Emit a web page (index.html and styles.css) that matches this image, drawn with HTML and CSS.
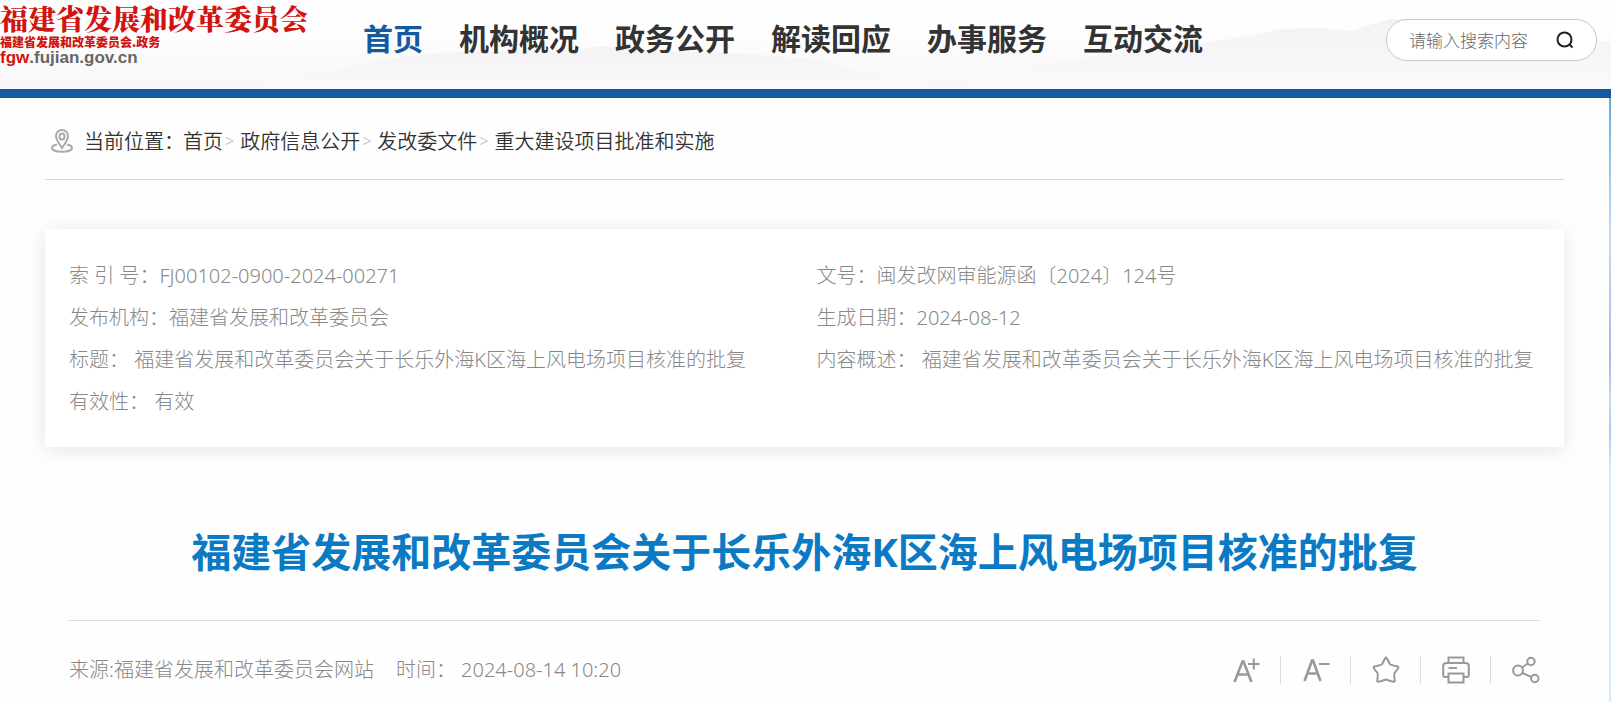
FILE: index.html
```html
<!DOCTYPE html>
<html lang="zh-CN">
<head>
<meta charset="utf-8">
<meta name="viewport" content="width=device-width, initial-scale=1">
<title>福建省发展和改革委员会关于长乐外海K区海上风电场项目核准的批复</title>
<link rel="stylesheet" href="styles.css">
</head>
<body>
<header class="site-header">
  <svg class="hills" viewBox="0 0 1611 89" preserveAspectRatio="none" aria-hidden="true">
    <defs>
      <linearGradient id="mist" x1="0" y1="0" x2="0" y2="1">
        <stop offset="0" stop-color="#f1eff1"/>
        <stop offset="1" stop-color="#fbf9fb"/>
      </linearGradient>
      <linearGradient id="haze" x1="0" y1="0" x2="0" y2="1">
        <stop offset="0" stop-color="#fefefe"/>
        <stop offset="1" stop-color="#f8f6f8"/>
      </linearGradient>
    </defs>
    <path fill="url(#haze)" d="M0 30H1611V89H0Z"/>
    <path fill="url(#mist)" opacity=".7" d="M240 89 L330 72 L370 62 L400 57 L440 53 L500 51 L580 50 L600 46 L640 50 L750 54 L820 60 L880 76 L960 89Z"/>
    <path fill="url(#mist)" opacity=".8" d="M960 89 L1000 72 L1110 54 L1170 48 L1250 36 L1280 29 L1320 28 L1350 31 L1390 19 L1450 22 L1560 36 L1611 42 V89Z"/>
  </svg>
  <a class="logo" href="#">
    <span class="logo-name">福建省发展和改革委员会</span>
    <span class="logo-sub">福建省发展和改革委员会.政务</span>
    <span class="logo-url"><b>fgw</b>.fujian.gov.cn</span>
  </a>
  <nav class="nav">
    <a class="active" href="#">首页</a>
    <a href="#">机构概况</a>
    <a href="#">政务公开</a>
    <a href="#">解读回应</a>
    <a href="#">办事服务</a>
    <a href="#">互动交流</a>
  </nav>
  <form class="search">
    <input type="text" placeholder="请输入搜索内容" aria-label="请输入搜索内容">
    <button type="button" aria-label="搜索">
      <svg width="18" height="18" viewBox="0 0 18 18"><circle cx="8.500" cy="8.500" r="7"/><path d="M13.500 13.500l3 3"/></svg>
    </button>
  </form>
</header>
<main class="page">
  <nav class="crumbs" aria-label="当前位置">
    <svg width="22" height="24" viewBox="0 0 22 24"><path d="M11 19C8 14.500 5 11 5 7a6 6 0 0 1 12 0C17 11 14 14.500 11 19z"/><ellipse cx="11" cy="7.500" rx="2.500" ry="3"/><path d="M6 15.500C3 16 1 17.400 1 19c0 2.300 4.500 3.800 10 3.800S21 21.300 21 19c0-1.600-2-3-5-3.500"/></svg>
    <span class="here">当前位置：</span>
    <a href="#">首页</a><span class="sep">&gt;</span>
    <a href="#">政府信息公开</a><span class="sep">&gt;</span>
    <a href="#">发改委文件</a><span class="sep">&gt;</span>
    <a href="#">重大建设项目批准和实施</a>
  </nav>
  <section class="card">
    <p>索 引 号：FJ00102-0900-2024-00271</p>
    <p>文号：闽发改网审能源函〔2024〕124号</p>
    <p>发布机构：福建省发展和改革委员会</p>
    <p>生成日期：2024-08-12</p>
    <p>标题： 福建省发展和改革委员会关于长乐外海K区海上风电场项目核准的批复</p>
    <p>内容概述： 福建省发展和改革委员会关于长乐外海K区海上风电场项目核准的批复</p>
    <p>有效性： 有效</p>
  </section>
  <article class="article">
    <h1>福建省发展和改革委员会关于长乐外海K区海上风电场项目核准的批复</h1>
    <div class="info">
      <span>来源:福建省发展和改革委员会网站</span>
      <span>时间： 2024-08-14 10:20</span>
      <div class="tools">
        <button type="button" aria-label="放大字体"><svg width="28" height="28" viewBox="0 0 28 28"><path class="thick" d="M2.500 26L10.500 5.500H11.500L19.500 26M5.500 18.500H16.500"/><path d="M16 8H27.500M21.800 2.500V13.500"/></svg></button>
        <button type="button" aria-label="缩小字体"><svg width="28" height="28" viewBox="0 0 28 28"><path class="thick" d="M2.500 25L10 4.500H11L18.500 25M5.500 17.500H16"/><path d="M17 8H27.500"/></svg></button>
        <button type="button" aria-label="收藏"><svg width="28" height="28" viewBox="0 0 28 28"><path stroke-linejoin="round" d="M14 1.500Q15 2 17.800 8Q18.500 9 26 10.500Q27.500 11.500 22.500 17Q21.800 18 22.800 25Q22.500 26.800 14 23.500Q5.500 26.800 5.200 25Q6.200 18 5.500 17Q.5 11.500 2 10.500Q9.500 9 10.200 8Q13 2 14 1.500Z"/></svg></button>
        <button type="button" aria-label="打印"><svg width="28" height="28" viewBox="0 0 28 28"><path d="M6.500 7V1.500H21.500V7M6 21H3Q1.200 21 1.200 19V10Q1.200 7 4.200 7H23.800Q26.800 7 26.800 10V19Q26.800 21 25 21H22M6.500 17.500H21.500V26.500H6.500ZM6.500 12H15"/></svg></button>
        <button type="button" aria-label="分享"><svg width="28" height="28" viewBox="0 0 28 28"><circle cx="6" cy="14.500" r="4.900"/><circle cx="19" cy="5.500" r="3.700"/><circle cx="22.800" cy="22.500" r="3.700"/><path d="M10 11.500L16 7.500M10.500 17L19.500 21.200"/></svg></button>
      </div>
    </div>
  </article>
</main>
</body>
</html>
```

FILE: styles.css
```css
* { box-sizing: border-box; }
html, body { min-height: 100%; }
body {
  margin: 0;
  background: linear-gradient(#62add6 98px, #9fcdec 180px, #c8d8f2 240px, #a8b6e0 360px, #c6daf4 400px, #a9c9ec 430px, #d4eaff 470px);
  color: #333;
  font: 300 20px/42px "Noto Sans", "Noto Sans CJK SC", sans-serif;
}
a { color: inherit; text-decoration: none; }
button { border: 0; padding: 0; background: none; cursor: pointer; }
svg { display: block; fill: none; stroke: currentColor; stroke-width: 2; }

.site-header {
  position: relative;
  display: flex;
  align-items: flex-start;
  height: 98px;
  border-bottom: 9px solid #1559a0;
  background: #fefefe;
}
.hills {
  position: absolute;
  inset: 0;
  width: 100%;
  height: 100%;
  stroke: none;
}
.logo {
  position: relative;
  display: flex;
  flex-direction: column;
  width: 363px;
  padding-top: 1px;
  color: #d1140f;
  white-space: nowrap;
}
.logo-name {
  font: 900 28px/34px "Noto Serif CJK SC", "Noto Sans CJK SC", serif;
}
.logo-sub { font: 900 12px/13px "Noto Sans CJK SC", sans-serif; }
.logo-url {
  font: bold 17px/19px "Liberation Sans", sans-serif;
  color: #666;
}
.logo-url b { color: #d1140f; }
.nav {
  position: relative;
  display: flex;
  gap: 36px;
  padding-top: 18px;
  font-size: 30px;
  font-weight: 700;
  white-space: nowrap;
}
.nav .active { color: #1559a0; }
.search {
  position: relative;
  display: flex;
  align-items: center;
  width: 211px;
  height: 42px;
  margin: 19px 14px 0 auto;
  padding: 0 22px;
  border: 1px solid #c8c8c8;
  border-radius: 21px;
  background: #fff;
}
.search input {
  flex: 1;
  min-width: 0;
  padding: 0;
  border: 0;
  outline: 0;
  background: none;
  font: 300 17px/24px "Noto Sans CJK SC", sans-serif;
}
.search input::placeholder { color: #666; }
.search button { color: #222; }

.page {
  margin-right: 2px;
  padding: 0 45px 12px;
  background: #fefefe;
}
.crumbs {
  display: flex;
  align-items: center;
  height: 82px;
  padding: 5px 0 0 6px;
  border-bottom: 1px solid #d9d9d9;
  white-space: nowrap;
}
.crumbs svg { margin-right: 11px; color: #aaa; stroke-width: 2; }
.crumbs a, .here { font-family: "Noto Sans CJK SC", sans-serif; font-weight: 350; }
.here { width: 99px; }
.sep { margin: 0 6px 0 2px; color: #bbb; font-size: 16px; }

.card {
  display: grid;
  grid-template-columns: 1fr 1fr;
  column-gap: 24px;
  margin-top: 49px;
  padding: 26px 24px 24px;
  background: #fff;
  box-shadow: 0 3px 18px rgba(0, 0, 0, .1);
  color: #888;
}
.card p { margin: 0; white-space: nowrap; }

.article { margin: 0 24px; }
.article h1 {
  margin: 0;
  padding: 75px 0 38px;
  border-bottom: 1px solid #ddd;
  color: #0a7ac4;
  font-size: 40px;
  line-height: 60px;
  text-align: center;
}
.info {
  display: flex;
  align-items: center;
  gap: 22px;
  height: 98px;
  color: #888;
}
.tools {
  display: flex;
  margin-left: auto;
}
.tools button { padding: 0 20px 0 21px; color: #999; }
.tools button + button { border-left: 1px solid #ddd; }
.tools button:last-child { padding-right: 0; }
.tools .thick { stroke-width: 2.6; }
```
